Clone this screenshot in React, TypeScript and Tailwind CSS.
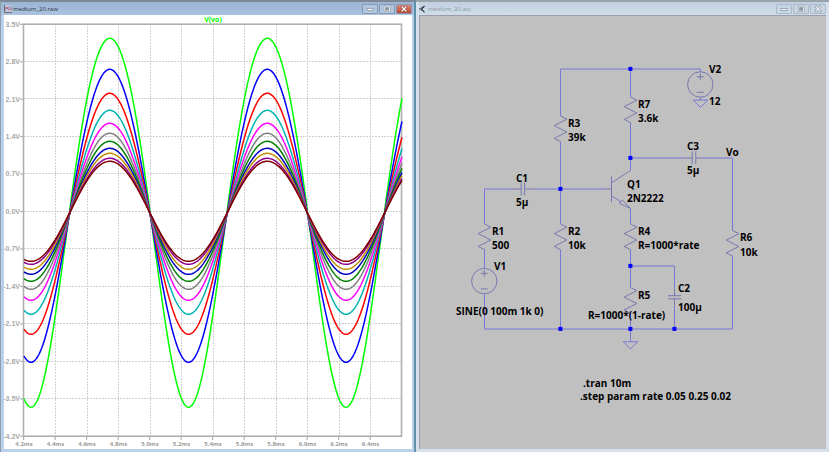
import type { ReactNode } from "react";
import clsx from "clsx";

/* ---------- waveform data ---------- */

// pixel distance of crest and trough from the 0 V line
const TRACES = [
  { color: "#00ff00", up: 173, down: 196 },
  { color: "#0000ff", up: 142, down: 151 },
  { color: "#ff0000", up: 118, down: 123 },
  { color: "#00b4b4", up: 101, down: 103 },
  { color: "#ff00ff", up: 88, down: 89 },
  { color: "#808080", up: 78, down: 78 },
  { color: "#008000", up: 70, down: 70 },
  { color: "#0000c0", up: 63, down: 63 },
  { color: "#c09000", up: 58, down: 58 },
  { color: "#900090", up: 53, down: 53 },
  { color: "#800000", up: 50, down: 50 },
];

const LEFT = 24;
const RIGHT = 402;
const TOP = 24;
const BOTTOM = 436;
const ZERO = 211.3;
const PERIOD = 157.5;

const VOLTS = ["3.5V", "2.8V", "2.1V", "1.4V", "0.7V", "0.0V", "-0.7V", "-1.4V", "-2.1V", "-2.8V", "-3.5V", "-4.2V"];
const TIMES = ["4.2ms", "4.4ms", "4.6ms", "4.8ms", "5.0ms", "5.2ms", "5.4ms", "5.6ms", "5.8ms", "6.0ms", "6.2ms", "6.4ms"];

function tracePath(up: number, down: number) {
  const amp = (up + down) / 2;
  const skew = (down - up) / 2;
  const points: string[] = [];
  for (let x = LEFT; x <= RIGHT; x += 1) {
    const th = ((x - 70.4) / PERIOD) * 2 * Math.PI;
    const v = amp * Math.sin(th) + skew * (0.77 * Math.cos(2 * th) - 0.23);
    points.push(`${x},${(ZERO - v).toFixed(2)}`);
  }
  return `M${points.join("L")}`;
}

function Waveform() {
  return (
    <svg
      viewBox="4 15 408 434"
      className="block h-full w-full bg-white font-['Open_Sans',sans-serif] font-bold"
      role="img"
      aria-label="V(vo) over time"
    >
      <g stroke="#d0d0d0" strokeWidth="1" strokeDasharray="2 1">
        {VOLTS.slice(1, -1).map((v, i) => {
          const y = Math.floor(TOP + (i + 1) * 37.45) + 0.5;
          return <line key={v} x1={LEFT} x2={RIGHT} y1={y} y2={y} />;
        })}
        {TIMES.slice(1).map((t, i) => {
          const x = Math.floor(LEFT + (i + 1) * 31.5) + 0.5;
          return <line key={t} x1={x} x2={x} y1={TOP} y2={BOTTOM} />;
        })}
      </g>

      <rect x={LEFT - 0.5} y={TOP + 0.2} width={RIGHT - LEFT} height={BOTTOM - TOP} fill="none" stroke="#b0b0b0" strokeWidth="1.6" />
      <g stroke="#b0b0b0" strokeWidth="1.2">
        {VOLTS.map((v, i) => (
          <line key={v} x1="20" x2={LEFT} y1={TOP + 0.3 + i * 37.45} y2={TOP + 0.3 + i * 37.45} />
        ))}
        {TIMES.map((t, i) => (
          <line key={t} x1={LEFT - 0.4 + i * 31.5} x2={LEFT - 0.4 + i * 31.5} y1={BOTTOM} y2={BOTTOM + 4} />
        ))}
      </g>

      {TRACES.map((t) => (
        <path key={t.color} d={tracePath(t.up, t.down)} fill="none" stroke={t.color} strokeWidth="1.5" />
      ))}

      <g fill="#a8a8a8" fontSize="7" fontFamily="Liberation Sans, sans-serif">
        {VOLTS.map((v, i) => (
          <text key={v} x="20" y={TOP + 2.6 + i * 37.45} textAnchor="end">{v}</text>
        ))}
      </g>
      <g fill="#9c9c9c" fontSize="6" textAnchor="middle">
        {TIMES.map((t, i) => (
          <text key={t} x={LEFT + i * 31.5} y="446">{t}</text>
        ))}
      </g>
      <text x="213" y="22" fontSize="7" fill="#00ff00" textAnchor="middle">V(vo)</text>
    </svg>
  );
}

/* ---------- schematic ---------- */

const WIRES = [
  "M560.5 115.5V68.5H700.5V71.5",
  "M560.5 141V223.5M560.5 249V328.5",
  "M630.5 68.5V96.5M630.5 122V170",
  "M630.5 157.5H684M703 157.5H732.5V230M732.5 255.5V328.5",
  "M484.5 223.5V188.5H512M534 188.5H604",
  "M484.5 249V268M484.5 293V328.5H732.5",
  "M630.5 208V223.5M630.5 249V287M630.5 313V341",
  "M630.5 265.5H674.5V288M674.5 305V328.5",
];

const RESISTORS = [
  [560.5, 115.5],
  [630.5, 96.5],
  [560.5, 223.5],
  [484.5, 223.5],
  [630.5, 223.5],
  [630.5, 287],
  [732.5, 230],
];

const NODES = [
  [630, 68],
  [630, 157],
  [560, 188],
  [630, 265],
  [560, 328],
  [630, 328],
  [674, 328],
];

const LABELS: [number, number, string][] = [
  [568, 126, "R3"],
  [568, 140, "39k"],
  [638, 107, "R7"],
  [638, 121, "3.6k"],
  [709, 72, "V2"],
  [709, 104, "12"],
  [687, 149, "C3"],
  [687, 173, "5µ"],
  [726, 155, "Vo"],
  [627, 187, "Q1"],
  [627, 201, "2N2222"],
  [516, 181, "C1"],
  [516, 205, "5µ"],
  [492, 234, "R1"],
  [492, 248, "500"],
  [568, 234, "R2"],
  [568, 248, "10k"],
  [494, 269, "V1"],
  [456, 314, "SINE(0 100m 1k 0)"],
  [638, 234, "R4"],
  [638, 248, "R=1000*rate"],
  [638, 298, "R5"],
  [588, 318, "R=1000*(1-rate)"],
  [678, 291, "C2"],
  [678, 310, "100µ"],
  [740, 240, "R6"],
  [740, 255, "10k"],
  [583, 386, ".tran 10m"],
  [580, 399, ".step param rate 0.05 0.25 0.02"],
];

function Source({ x, y }: { x: number; y: number }) {
  return (
    <g>
      <circle cx={x} cy={y} r="12.7" />
      <path d={`M${x - 3.5} ${y - 7.7}h7M${x} ${y - 11}v6.5M${x - 3.5} ${y + 7.8}h7`} />
    </g>
  );
}

function Schematic() {
  return (
    <svg
      viewBox="420 16 406 432"
      className="block h-full w-full bg-[#c0c0c0] font-['Open_Sans',sans-serif] font-bold"
      role="img"
      aria-label="Common emitter amplifier schematic"
    >
      <g fill="none" stroke="#7878d8" strokeWidth="1">
        {WIRES.map((d) => (
          <path key={d} d={d} />
        ))}
        <path d="M693.3 99.5H707.7L700.5 107Z" />
        <path d="M623.3 341.3H637.7L630.5 348.3Z" />
      </g>

      <g fill="none" stroke="#7878b0" strokeWidth="1">
        {RESISTORS.map(([x, y]) => (
          <path key={`${x}-${y}`} d={`M${x} ${y}l6.3 3.2l-12.6 6.4l12.6 6.4l-12.6 6.4l6.3 3.2`} />
        ))}
        <Source x={700.3} y={84} />
        <Source x={484.3} y={280.6} />
        <path d="M700.5 96.7V99.5" />
        {/* C3, C1, C2 */}
        <path d="M684 157.5H692M692.2 150.7V163.7M695.8 150.7V163.7M696 157.5H703" />
        <path d="M512 188.5H521M521.2 182V195M524.6 182V195M525 188.5H534" />
        <path d="M674.5 288V295M668 295.2H681.3M668 298.3H681.3M674.5 298.5V305" />
        {/* Q1 */}
        <path d="M604 188.5H611.5M611.5 176V201.5M611.5 182.3L630.5 170M611.5 195.3L620.8 201.2M630.5 208L619.2 202.6L622.3 199.6Z" />
      </g>

      <g fill="#0000ff">
        {NODES.map(([x, y]) => (
          <rect key={`${x}-${y}`} x={x - 1.6} y={y - 1.6} width="4" height="4" />
        ))}
      </g>

      <g fill="#000" fontSize="10">
        {LABELS.map(([x, y, label]) => (
          <text key={`${x}-${y}`} x={x} y={y}>{label}</text>
        ))}
      </g>
    </svg>
  );
}

/* ---------- window chrome ---------- */

function WindowButtons({ active }: { active?: boolean }) {
  const button = clsx(
    "flex h-2.5 w-4 items-center justify-center rounded-[1px] border",
    active ? "border-[#8799b3] bg-[#b3c6df] text-white" : "border-[#aabacb] bg-[#c8d6e4] text-[#f4f6f8]",
  );
  return (
    <div className="flex gap-px">
      <button type="button" aria-label="Minimize" className={button}>
        <svg viewBox="0 0 8 8" className="h-2 w-2">
          <rect x="1" y="3.5" width="6" height="2" fill="currentColor" stroke="#74808f" strokeWidth="0.6" />
        </svg>
      </button>
      <button type="button" aria-label="Maximize" className={button}>
        <svg viewBox="0 0 8 8" className="h-2 w-2">
          <rect x="1.8" y="1.8" width="4.6" height="4.2" fill="#8b97a6" stroke="#74808f" strokeWidth="1.8" />
          <rect x="1.8" y="1.8" width="4.6" height="4.2" fill="none" stroke="currentColor" strokeWidth="0.9" />
        </svg>
      </button>
      <button
        type="button"
        aria-label="Close"
        className={clsx(button, active && "border-[#8c4a48] bg-linear-to-b from-[#d98a7c] to-[#bd4430]")}
      >
        <svg viewBox="0 0 8 8" className="h-2 w-2" strokeLinecap="square">
          <path d="M2 2L6 6M6 2L2 6" stroke={active ? "#8a3a34" : "#74808f"} strokeWidth="2.4" />
          <path d="M2 2L6 6M6 2L2 6" stroke="currentColor" strokeWidth="1.3" />
        </svg>
      </button>
    </div>
  );
}

function WaveIcon() {
  return (
    <svg viewBox="0 0 8 8" className="h-2 w-2" fill="none">
      <rect width="8" height="8" fill="#c3c4d8" />
      <path d="M0.5 0V7.5H8" stroke="#666b80" />
      <path d="M1 5L3 2L5 5L8 3" stroke="#c56b78" />
      <path d="M1 2L3 4L6 1.5L8 5" stroke="#7377b3" strokeWidth="0.7" />
    </svg>
  );
}

function TransistorIcon() {
  return (
    <svg viewBox="0 0 8 8" className="h-2 w-2" fill="none" stroke="#26323c">
      <path d="M0 4H3M3 2V6M3 3.5L5.5 1M3 4.5L5.5 7.5" strokeWidth="1.1" />
    </svg>
  );
}

type WindowProps = {
  title: string;
  icon: ReactNode;
  active?: boolean;
  children: ReactNode;
};

function ChildWindow({ title, icon, active, children }: WindowProps) {
  return (
    <section
      className={clsx(
        "flex min-h-0 min-w-0 flex-col border-t-2 pb-[3px]",
        active
          ? "border-r-2 border-l border-t-[#7d8894] border-r-[#5f91a8] border-l-[#8e9dae] bg-[#b9d1ea] pr-0.5 pl-[3px]"
          : "border-t-[#9aa2aa] bg-[#d5e1ed] px-[3px]",
      )}
    >
      <header
        className={clsx(
          "flex h-[13px] shrink-0 items-center gap-px",
          active
            ? "-mr-0.5 -ml-[3px] bg-linear-to-b from-[#9cb5d4] to-[#a9c2de] pr-0.5 pl-[3px] text-[#2c3440]"
            : "bg-linear-to-b from-[#c1cfdf] to-[#d1deea] text-[#8e98a2]",
        )}
      >
        {icon}
        <h2 className="flex-1 truncate text-[6px] leading-3">{title}</h2>
        <WindowButtons active={active} />
      </header>
      <div className={clsx("min-h-0 flex-1", !active && "border-t border-l border-[#9c9ca8]")}>{children}</div>
    </section>
  );
}

export default function App() {
  return (
    <main className="grid h-screen grid-cols-[416fr_413fr] bg-white pr-px pb-px font-['Open_Sans',sans-serif]">
      <ChildWindow title="medium_20.raw" icon={<WaveIcon />} active>
        <Waveform />
      </ChildWindow>
      <ChildWindow title="medium_20.asc" icon={<TransistorIcon />}>
        <Schematic />
      </ChildWindow>
    </main>
  );
}
